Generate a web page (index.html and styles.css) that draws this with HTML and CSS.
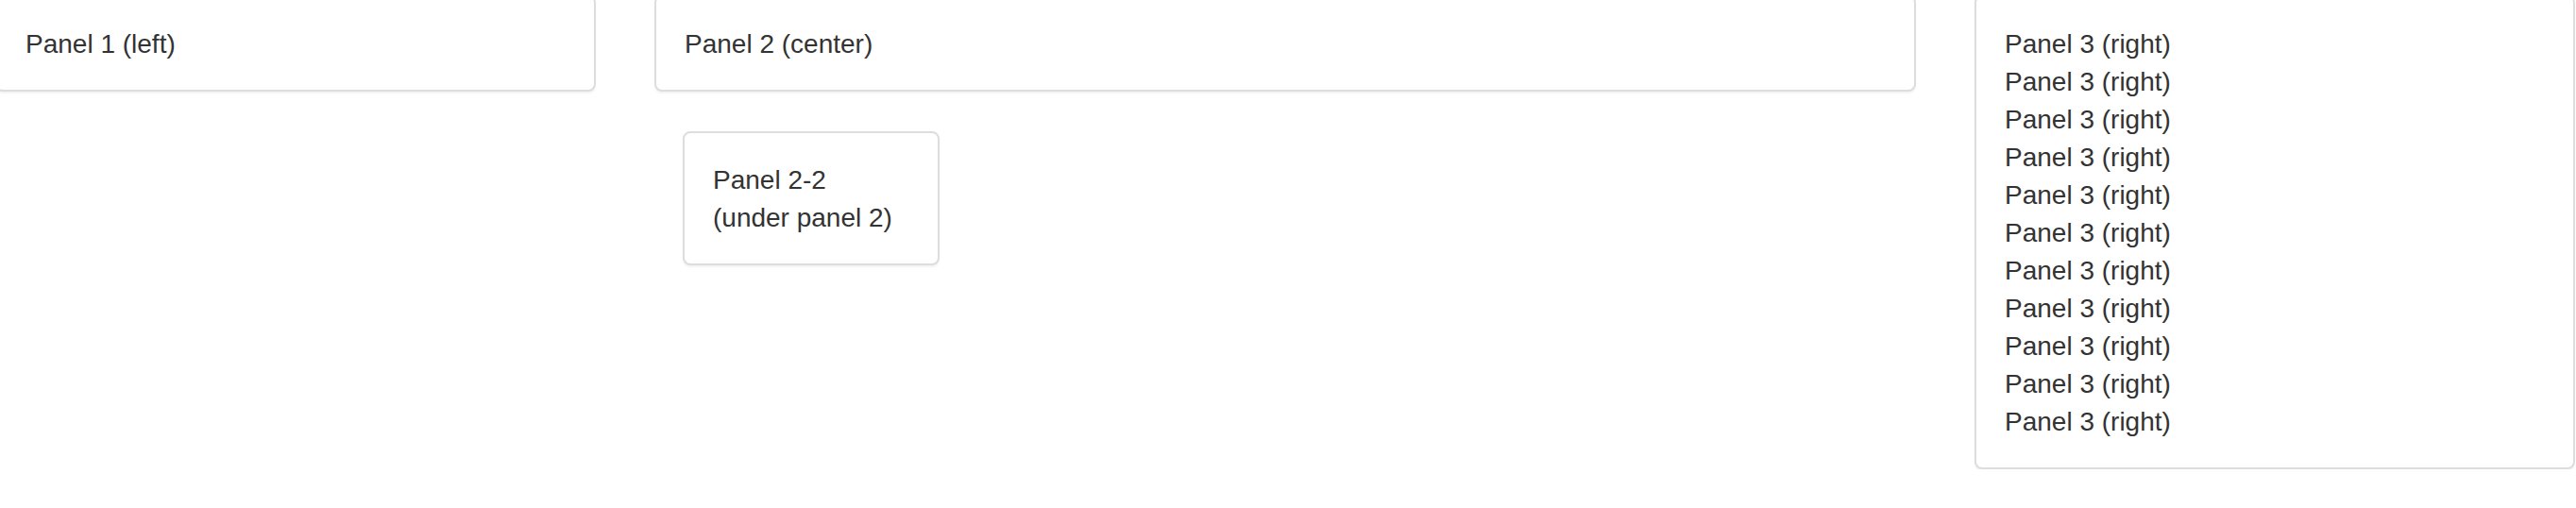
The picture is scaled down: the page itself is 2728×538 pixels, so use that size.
FILE: index.html
```html
<!DOCTYPE html>
<html lang="en">
<head>
  <meta charset="UTF-8">
  <title>Panels</title>
  <link rel="stylesheet" href="styles.css">
</head>
<body>
  <div class="row">
    <div class="col">
      <div class="panel">Panel 1 (left)</div>
    </div>
    <div class="col">
      <div class="panel">Panel 2 (center)</div>
      <div class="panel panel-sub">Panel 2-2<br>(under panel 2)</div>
    </div>
    <div class="col">
      <div class="panel">
        <div>Panel 3 (right)</div>
        <div>Panel 3 (right)</div>
        <div>Panel 3 (right)</div>
        <div>Panel 3 (right)</div>
        <div>Panel 3 (right)</div>
        <div>Panel 3 (right)</div>
        <div>Panel 3 (right)</div>
        <div>Panel 3 (right)</div>
        <div>Panel 3 (right)</div>
        <div>Panel 3 (right)</div>
        <div>Panel 3 (right)</div>
      </div>
    </div>
  </div>
</body>
</html>
```

FILE: styles.css
```css
body {
  margin: 0;
  background: #fff;
  font-family: "Liberation Sans", Arial, sans-serif;
  font-size: 28px;
  line-height: 40px;
  color: #333;
  overflow: hidden;
}
.row {
  display: grid;
  grid-template-columns: 636px 1336px 636px;
  column-gap: 62px;
  align-items: start;
  margin: -5px 0 0 -5px;
}
.panel {
  background: #fff;
  border: 2px solid #ddd;
  border-radius: 8px;
  box-shadow: 0 2px 2px rgba(0, 0, 0, 0.05);
  padding: 30px 30px 28px;
}
.panel-sub {
  width: 272px;
  box-sizing: border-box;
  margin: 42px 0 0 30px;
}
```
